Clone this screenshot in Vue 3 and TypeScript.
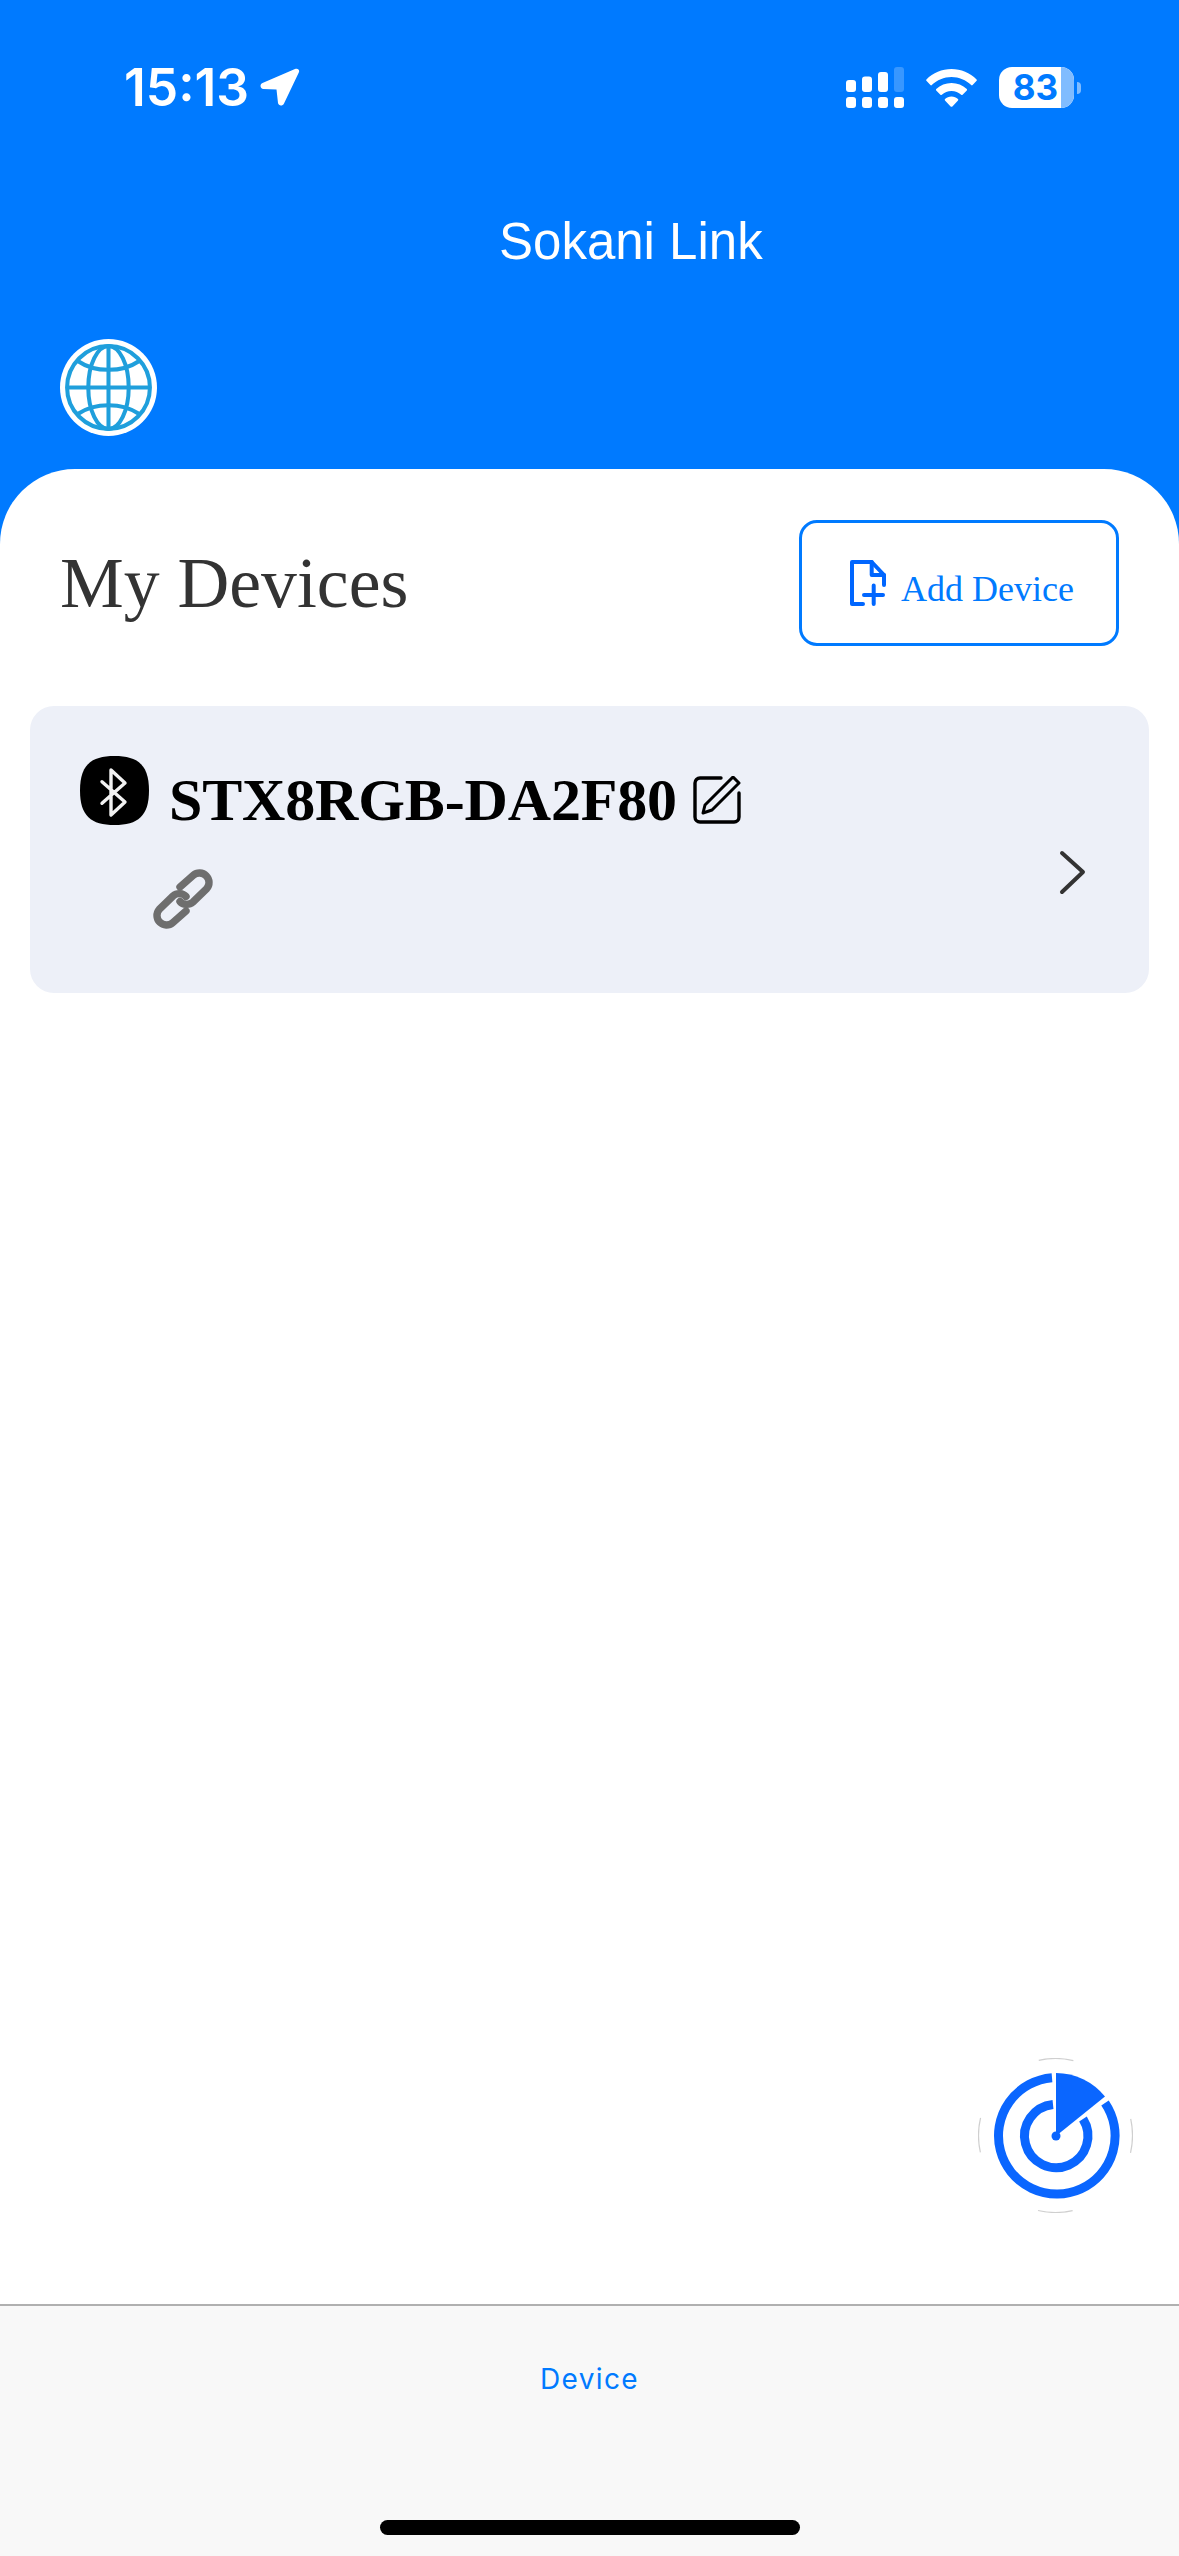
<script setup lang="ts">
const title: string = 'Sokani Link'
const deviceName: string = 'STX8RGB-DA2F80'
</script>

<template>
  <div class="screen">
    <header class="top">
      <div class="status">
        <div class="status-left">
          <span class="time">15:13</span>
          <svg class="arrow" viewBox="0 0 40 39" width="40" height="39">
            <path d="M2.500 15 35 1c3-1.200 5 1 3.800 3.500L24 35.500c-1.500 3-5.500 2.500-6-.5l-1.500-13.500-13-.5c-3.500-.5-4-4.500-1-6Z" fill="#fff"/>
          </svg>
        </div>
        <div class="status-right">
          <svg class="signal" viewBox="0 0 58 41" width="58" height="41">
            <rect x="0" y="13" width="10" height="12" rx="3" fill="#fff"/>
            <rect x="16" y="9.500" width="10" height="15.500" rx="3" fill="#fff"/>
            <rect x="32" y="5" width="10" height="20" rx="3" fill="#fff"/>
            <rect x="48" y="0" width="10" height="25" rx="3" fill="#fff" fill-opacity=".22"/>
            <rect x="0" y="30" width="10" height="11" rx="3" fill="#fff"/>
            <rect x="16" y="30" width="10" height="11" rx="3" fill="#fff"/>
            <rect x="32" y="30" width="10" height="11" rx="3" fill="#fff"/>
            <rect x="48" y="30" width="10" height="11" rx="3" fill="#fff"/>
          </svg>
          <svg class="wifi" viewBox="0 0 51 38" width="51" height="38">
            <path d="M25.500 0C35 0 44 3.800 50.600 10.400c.4.400.4 1 0 1.400l-4 4.300c-.4.400-1 .4-1.400 0C40 11 33 8 25.500 8S11 11 5.800 16.100c-.4.400-1 .4-1.400 0l-4-4.300c-.4-.4-.4-1 0-1.400C7 3.800 16 0 25.500 0Z" fill="#fff"/>
            <path d="M25.500 14c5.800 0 11.200 2.200 15.300 6 .4.400.4 1 0 1.400l-4.200 4.400c-.4.400-1 .4-1.400 0-2.600-2.400-6-3.800-9.700-3.800s-7.100 1.400-9.700 3.800c-.4.400-1 .4-1.400 0l-4.200-4.400c-.4-.4-.4-1 0-1.400 4.100-3.800 9.500-6 15.300-6Z" fill="#fff"/>
            <path d="M25.500 27.500c2.500 0 4.800.9 6.500 2.500.4.400.4 1 0 1.400l-5.600 6c-.5.500-1.300.5-1.800 0l-5.600-6c-.4-.4-.4-1 0-1.400 1.700-1.600 4-2.500 6.500-2.500Z" fill="#fff"/>
          </svg>
          <div class="battery">
            <div class="battery-body">
              <span class="battery-num">83</span>
              <span class="battery-rest"></span>
            </div>
            <span class="battery-cap"></span>
          </div>
        </div>
      </div>
      <h1 class="title">{{ title }}</h1>
      <svg class="globe" viewBox="0 0 96 96" width="97" height="97">
        <circle cx="48" cy="48" r="48" fill="#fff"/>
        <g fill="none" stroke="#1f9fdc" stroke-width="4">
          <circle cx="48" cy="48" r="41"/>
          <ellipse cx="48" cy="48" rx="20" ry="41"/>
          <path d="M48 7v82M7 48h82"/>
          <path d="M18 22c8 5.500 19 8.500 30 8.500s22-3 30-8.500"/>
          <path d="M18 74c8-5.500 19-8.500 30-8.500s22 3 30 8.500"/>
        </g>
      </svg>
    </header>

    <main class="panel">
      <div class="panel-head">
        <h2 class="heading">My Devices</h2>
        <button class="add" type="button">
          <svg class="add-icon" viewBox="0 0 36 46" width="36" height="46">
            <g fill="none" stroke="#0066ff" stroke-width="4" stroke-linecap="round" stroke-linejoin="round">
              <path d="M13 44H2V2h19.700L34 15v10"/>
              <path d="M21.700 2v13H34"/>
              <path d="M14 35h19M23.700 25.500V44"/>
            </g>
          </svg>
          <span class="add-label">Add Device</span>
        </button>
      </div>

      <article class="card">
        <div class="card-info">
          <div class="name-row">
            <svg class="bt" viewBox="0 0 69 69" width="69" height="69">
              <path d="M34.500 0C58 0 69 9 69 34.500S58 69 34.500 69 0 60 0 34.500 11 0 34.500 0Z" fill="#000"/>
              <path d="M22 25.700 45 46 31 59V14l14 13-23 20.300" fill="none" stroke="#f2f2f2" stroke-width="3.400" stroke-linecap="round" stroke-linejoin="round"/>
            </svg>
            <span class="name">{{ deviceName }}</span>
            <svg class="edit" viewBox="0 0 48 48" width="48" height="48">
              <path d="M28 2H7a5 5 0 0 0-5 5v34a5 5 0 0 0 5 5h34a5 5 0 0 0 5-5V17" fill="none" stroke="#000" stroke-width="3.400" stroke-linecap="round"/>
              <path d="M40 1l6 6-27 27-9 3 2-8L40 1Z" fill="none" stroke="#000" stroke-width="3" stroke-linejoin="round"/>
            </svg>
          </div>
          <svg class="link" viewBox="0 0 62 62" width="62" height="62">
            <g fill="none" stroke="#6e6e6e" stroke-width="7.400" stroke-linecap="round">
              <path d="M28 19 41.300 7.300a9.500 9.500 0 0 1 13.400 13.400L41 34c-4 3.500-10 3-13-.5"/>
              <path d="M34 43 20.700 54.700A9.500 9.500 0 0 1 7.300 41.300L21 28c4-3.500 10-3 13 .5"/>
            </g>
          </svg>
        </div>
        <svg class="chevron" viewBox="0 0 27 45" width="27" height="45">
          <path d="M3 3l21 19L3 42" fill="none" stroke="#333" stroke-width="4" stroke-linecap="round" stroke-linejoin="round"/>
        </svg>
      </article>
    </main>

    <button class="fab" type="button" aria-label="Scan">
      <svg viewBox="0 0 155 155" width="155" height="155">
        <circle cx="77.500" cy="77.500" r="77" fill="#fff" stroke="#cfcfcf" stroke-width="1.200" stroke-dasharray="35 85.950" stroke-dashoffset="17.500"/>
        <g fill="none" stroke="#0a66ff" stroke-width="9">
          <path d="M74 19.700A58.300 58.300 0 1 0 127 45"/>
          <path d="M75 46.400A31.700 31.700 0 1 0 105 61"/>
        </g>
        <path d="M78 78V15a63 63 0 0 1 49 23.500Z" fill="#0a66ff"/>
        <circle cx="78" cy="78" r="4.500" fill="#0a66ff"/>
      </svg>
    </button>

    <footer class="tabbar">
      <span class="tab-label">Device</span>
      <span class="home"></span>
    </footer>
  </div>
</template>

<style>
html, body { margin: 0; background: #fff; }
</style>

<style scoped>
.screen {
  position: relative;
  width: 1179px;
  height: 2556px;
  display: flex;
  flex-direction: column;
  background: #007aff;
  overflow: hidden;
  font-family: "Liberation Serif", serif;
}
.top { height: 469px; flex: none; display: flex; flex-direction: column; }
.status {
  height: 41px;
  margin-top: 67px;
  padding: 0 98px 0 124px;
  display: flex;
  justify-content: space-between;
  align-items: center;
}
.status-left { display: flex; align-items: center; gap: 11px; }
.time {
  font-family: Inter, sans-serif;
  font-weight: 600;
  font-size: 51.5px;
  line-height: 41px;
  color: #fff;
}
.arrow, .signal, .wifi, .globe, .add-icon, .bt, .edit, .link, .chevron { display: block; flex: none; }
.status-right { display: flex; align-items: center; }
.wifi { margin-left: 22px; }
.battery { display: flex; align-items: center; margin-left: 22px; }
.battery-body {
  width: 75px;
  height: 41px;
  border-radius: 13px;
  background: #fff;
  display: flex;
}
.battery-num {
  width: 62px;
  box-sizing: border-box;
  padding-right: 3px;
  text-align: right;
  font-family: Inter, sans-serif;
  font-weight: 700;
  font-size: 35px;
  line-height: 41px;
  color: #007aff;
}
.battery-rest { flex: 1; background: #80bcff; border-radius: 0 13px 13px 0; }
.battery-cap {
  width: 4px;
  height: 12px;
  margin-left: 3px;
  border-radius: 0 5px 5px 0;
  background: #80bcff;
}
.title {
  margin: 109px 0 0 499px;
  font-family: "Liberation Sans", sans-serif;
  font-weight: 400;
  font-size: 51px;
  line-height: 50px;
  color: #fff;
}
.globe { margin: 72px 0 0 60px; }

.panel {
  flex: 1;
  background: #fff;
  border-radius: 75px 75px 0 0;
  padding: 51px 30px 0;
  display: flex;
  flex-direction: column;
}
.panel-head {
  display: flex;
  justify-content: space-between;
  align-items: center;
  padding: 0 30px;
  height: 126px;
}
.heading {
  margin: 0;
  font-weight: 400;
  font-size: 71.7px;
  line-height: 80px;
  color: #333;
}
.add {
  width: 320px;
  height: 126px;
  box-sizing: border-box;
  border: 3px solid #007aff;
  border-radius: 18px;
  background: #fff;
  padding: 0 0 0 48px;
  display: flex;
  align-items: center;
  gap: 15px;
  font-family: "Liberation Serif", serif;
  font-size: 36px;
  color: #007aff;
}
.add-label { padding-top: 12px; }
.card {
  margin-top: 60px;
  height: 287px;
  box-sizing: border-box;
  background: #edf0f8;
  border-radius: 24px;
  padding: 50px 63px 0 50px;
  display: flex;
  justify-content: space-between;
  align-items: flex-start;
}
.name-row { display: flex; align-items: center; }
.name {
  margin-left: 20px;
  font-weight: 700;
  font-size: 60px;
  line-height: 69px;
  letter-spacing: -.15px;
  color: #000;
  transform: translateY(10px);
}
.edit { margin-left: 16px; transform: translateY(9px); }
.link { margin: 43px 0 0 72px; }
.chevron { margin-top: 94px; }

.fab {
  position: absolute;
  left: 978px;
  top: 2058px;
  width: 155px;
  height: 155px;
  padding: 0;
  border: 0;
  background: transparent;
}
.fab svg { display: block; }

.tabbar {
  flex: none;
  height: 252px;
  box-sizing: border-box;
  border-top: 2px solid #b0b0b0;
  background: #f8f8f8;
  display: flex;
  flex-direction: column;
  align-items: center;
}
.tab-label {
  margin-top: 56px;
  font-family: Inter, sans-serif;
  font-size: 28px;
  line-height: 34px;
  letter-spacing: 1.4px;
  color: #007aff;
}
.home {
  margin-top: 124px;
  width: 420px;
  height: 15px;
  border-radius: 8px;
  background: #000;
}
</style>
